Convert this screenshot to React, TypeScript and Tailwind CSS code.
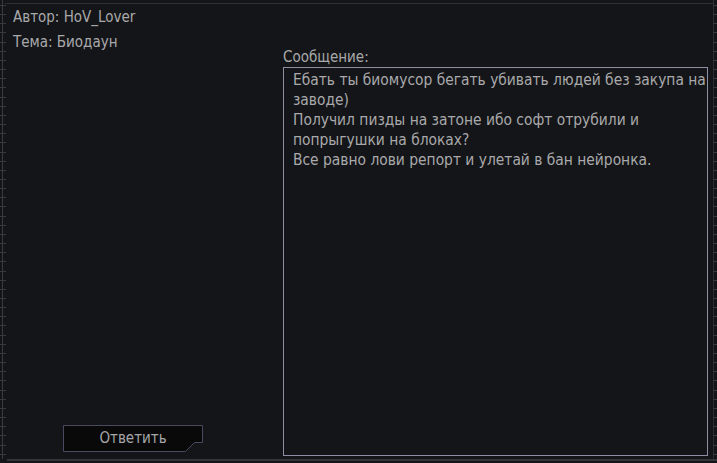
const ticks = Array.from({ length: 50 }, (_, i) => i);

const Ticks = ({ side }: { side: "left" | "right" }) => (
  <div className="absolute top-[5px] bottom-[8px] flex flex-col justify-between" style={{ [side]: 0 } as React.CSSProperties}>
    {ticks.map((i) => (
      <div key={i} className={side === "left" ? "h-px w-[6px] bg-[#3a3a3c]" : "h-px w-[4px] ml-auto bg-[#3a3a3c]"} />
    ))}
  </div>
);

const App = () => {
  return (
    <div className="relative h-[463px] w-[717px] overflow-hidden bg-[#141518] font-['DejaVu_Sans_Condensed',sans-serif] text-[#a9a9ab]">
      {/* frame lines */}
      <div className="absolute left-[2px] top-0 bottom-[4px] w-px bg-[#3a3a3c]" />
      <div className="absolute right-[3px] top-0 bottom-[4px] w-px bg-[#2e2e30]" />
      <div className="absolute left-[5px] right-[4px] top-[3px] h-px bg-[#303033]" />
      <div className="absolute left-[7px] right-0 bottom-[2px] h-[2px] bg-[#34353a]" />
      <Ticks side="left" />
      <Ticks side="right" />

      <div className="flex h-full">
        {/* left column */}
        <div className="flex w-[283px] flex-col pl-[13px] pt-[7px]">
          <div className="text-[15px] leading-[20px]">Автор: HoV_Lover</div>
          <div className="mt-[5px] text-[15px] leading-[20px]">Тема: Биодаун</div>
          <div className="mt-auto mb-[11px] ml-[50px]">
            <button className="relative h-[27px] w-[140px] text-[15px] text-[#a6a6a8]">
              <svg className="absolute inset-0" width="140" height="27" viewBox="0 0 140 27">
                <path d="M0.5 0.5 H139.5 V17.5 H131.5 L122.5 26.5 H0.5 Z" fill="#09090a" stroke="#4b4960" />
              </svg>
              <span className="relative">Ответить</span>
            </button>
          </div>
        </div>

        {/* message */}
        <div className="flex flex-1 flex-col pt-[48px] pr-[9px] pb-[7px]">
          <div className="text-[15px] leading-[18px]">Сообщение:</div>
          <div className="mt-[1px] flex-1 border border-[#8c8fa3] pl-[9px] pr-[1px] pt-[2px] text-[15.4px] leading-[20px]">
            Ебать ты биомусор бегать убивать людей без закупа на заводе)
            <br />
            Получил пизды на затоне ибо софт отрубили и попрыгушки на блоках?
            <br />
            Все равно лови репорт и улетай в бан нейронка.
          </div>
        </div>
      </div>
    </div>
  );
};

export default App;
